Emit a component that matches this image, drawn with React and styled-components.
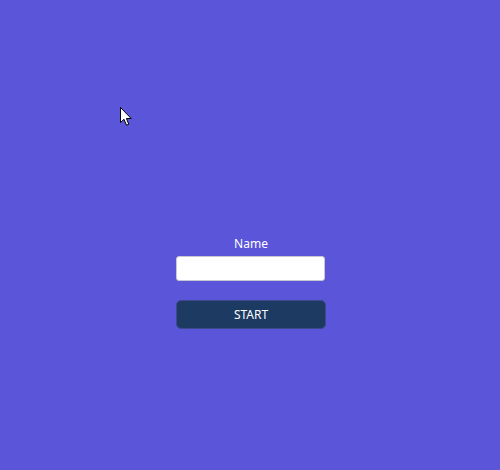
import styled, { createGlobalStyle } from 'styled-components';

const GlobalStyle = createGlobalStyle`
  html, body {
    margin: 0;
    padding: 0;
    background: #5a55d9;
  }
  body {
    font-family: "Noto Sans", "Open Sans", sans-serif;
  }
`;

const Page = styled.div`
  position: relative;
  width: 500px;
  height: 470px;
  background: #5a55d9;
  display: flex;
  flex-direction: column;
  align-items: center;
  padding-top: 236px;
  padding-left: 2px;
  box-sizing: border-box;
`;

const Form = styled.form`
  display: flex;
  flex-direction: column;
  align-items: center;
  width: 150px;
`;

const Label = styled.label`
  color: #ffffff;
  font-size: 12px;
  line-height: 16px;
  margin-bottom: 4px;
`;

const Input = styled.input`
  width: 149px;
  height: 25px;
  box-sizing: border-box;
  border: 1px solid #c8c8d0;
  border-radius: 3px;
  background: #ffffff;
  outline: none;
  padding: 0 6px;
  margin-bottom: 19px;
  margin-right: 1px;
`;

const Button = styled.button`
  width: 150px;
  height: 29px;
  box-sizing: border-box;
  border: 1px solid #3d4a8c;
  border-radius: 5px;
  background: #1d3a63;
  color: #ffffff;
  font-family: "Noto Sans", "Open Sans", sans-serif;
  font-size: 12px;
  cursor: pointer;
`;

const Cursor = styled.svg`
  position: absolute;
  left: 120px;
  top: 107px;
`;

export default function App() {
  return (
    <>
      <GlobalStyle />
      <Page>
        <Cursor width="14" height="20" viewBox="0 0 14 20">
          <path d="M0.5 0.5 L0.5 15.5 L4 12.3 L6.5 18.2 L8.8 17.2 L6.4 11.5 L11.2 11.5 Z" fill="#fff" stroke="#000" strokeWidth="1" />
        </Cursor>
        <Form onSubmit={(e) => e.preventDefault()}>
          <Label htmlFor="name">Name</Label>
          <Input id="name" type="text" />
          <Button type="submit">START</Button>
        </Form>
      </Page>
    </>
  );
}
